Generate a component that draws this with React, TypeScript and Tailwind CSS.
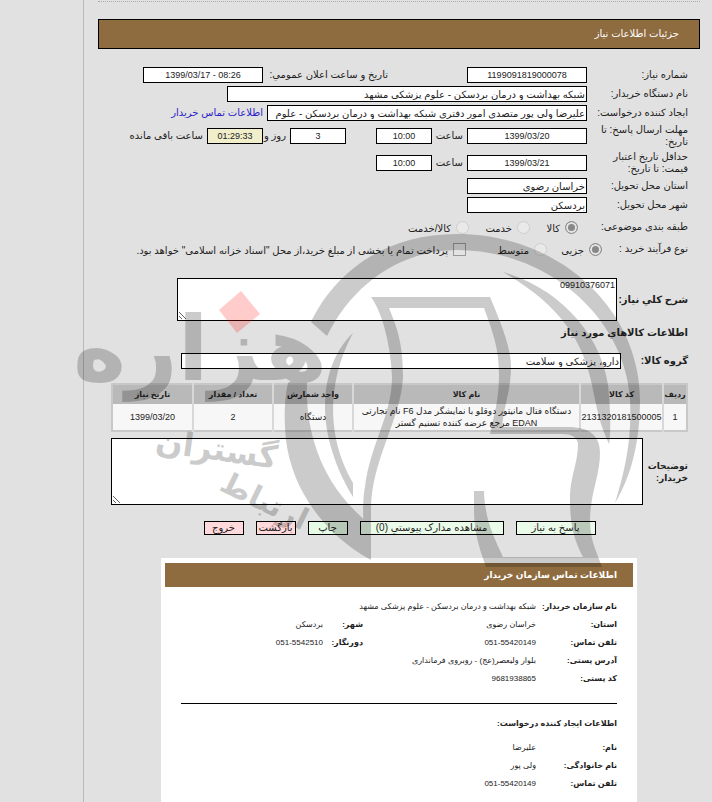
import type { ReactNode } from 'react';

const ITEM_HEADERS = [
  { label: 'ردیف', width: 'w-[24px]' },
  { label: 'کد کالا', width: 'w-[83px]' },
  { label: 'نام کالا', width: '' },
  { label: 'واحد شمارش', width: 'w-[80px]' },
  { label: 'تعداد / مقدار', width: 'w-[80px]' },
  { label: 'تاریخ نیاز', width: 'w-[81px]' },
];

const ITEMS = [
  [
    '1',
    '2131320181500005',
    'دستگاه فتال مانیتور دوقلو با نمایشگر مدل F6 نام تجارتی EDAN مرجع عرضه کننده تسنیم گستر',
    'دستگاه',
    '2',
    '1399/03/20',
  ],
];

const ACTIONS = [
  { label: 'پاسخ به نیاز', className: 'w-20 bg-[#eafbe9]' },
  { label: 'مشاهده مدارک پیوستي (0)', className: 'w-36 bg-[#eafbe9]' },
  { label: 'چاپ', className: 'w-10 bg-[#e6fbe6]' },
  { label: 'بازگشت', className: 'w-10 bg-[#ffd9dc]' },
  { label: 'خروج', className: 'w-10 bg-[#ffd9dc]' },
];

interface FieldProps {
  id: string;
  value: string;
  className: string;
  numeric?: boolean;
  label?: string;
}

function Field({ id, value, className, numeric, label }: FieldProps) {
  return (
    <input
      id={id}
      readOnly
      aria-label={label}
      defaultValue={value}
      className={`h-4 shrink-0 border border-black px-px ${numeric ? 'text-center text-[9px]' : ''} ${className}`}
    />
  );
}

function Row({ id, label, children }: { id: string; label: string; children: ReactNode }) {
  return (
    <div className="flex items-center">
      <label htmlFor={id} className="w-[101px] shrink-0 pl-1">
        {label}
      </label>
      <div className="flex items-center gap-1 whitespace-nowrap">{children}</div>
    </div>
  );
}

interface RadioProps {
  name: string;
  label: string;
  className?: string;
  checked?: boolean;
}

function Radio({ name, label, className = '', checked }: RadioProps) {
  return (
    <label className={`flex shrink-0 items-center gap-[5px] whitespace-nowrap ${className}`}>
      <input
        type="radio"
        name={name}
        defaultChecked={checked}
        className="size-[13px] shrink-0 appearance-none rounded-full border border-[#cfcfcf] bg-[#e9e9e9] checked:border-[#8f8f8f] checked:bg-[#888] checked:shadow-[inset_0_0_0_2px_#e4e4e4]"
      />
      <span className="pt-1">{label}</span>
    </label>
  );
}

function ContactRow({ label, value }: { label: string; value: string }) {
  return (
    <div className="flex">
      <dt className="w-[81px] shrink-0 font-bold">{label}</dt>
      <dd>{value}</dd>
    </div>
  );
}

function Watermark() {
  return (
    <svg
      aria-hidden="true"
      width="600"
      height="360"
      viewBox="60 220 600 360"
      className="pointer-events-none absolute top-[220px] left-[60px] opacity-20"
    >
      {/* Ring */}
      <path d="M311 322C335 272 385 234 457 234C560 234 640 310 640 400C640 440 632 475 615 503C625 470 632 440 630 400C626 320 550 250 457 250C400 250 352 285 327 336Z" />
      <path d="M288 383Q297 376 307 382C305 430 320 485 371 525V560C325 535 292 490 286 440C284 420 284 400 288 383Z" />
      <path d="M353 333C322 362 310 425 353 497V483C328 440 325 385 353 333Z" />
      <path d="M503 272C565 290 602 340 608 385Q612 425 609 444C600 425 597 410 592 385C583 340 560 305 503 272Z" />
      {/* Figure */}
      <path d="M371 297H490C504 330 511 350 511 367C511 390 504 405 502 427H568C590 427 600 436 600 453C600 475 590 495 590 520C590 540 596 550 602 567H486C478 545 474 530 474 510V491H484C485 520 493 535 503 557H583C574 540 570 525 570 500C570 475 578 465 578 443Q576 434 563 434H490C494 415 499 400 499 375C499 350 494 335 484 308H389C398 330 403 345 403 377C401 420 371 460 371 510V560L365 533C362 520 363 495 365 487C370 445 392 415 392 377C391 350 384 315 371 297Z" />
      <g fontFamily="DejaVu Sans, sans-serif" fontWeight="700" textAnchor="middle" direction="rtl">
        <text x="200" y="380" fontSize="90">هزاره</text>
        <text x="215" y="460" fontSize="32" transform="rotate(8 215 460)">گستران</text>
        <text x="260" y="510" fontSize="30" transform="rotate(26 260 510)">ارتباط</text>
      </g>
      <path fill="#f00" d="M241 291L260 314L237 333L219 310Z" />
    </svg>
  );
}

export default function App() {
  return (
    <div
      dir="rtl"
      className="relative flex min-h-screen flex-row-reverse overflow-hidden bg-[#e1e1e1] font-['Liberation_Sans','DejaVu_Sans',sans-serif] text-[10px] leading-3 text-[#222]"
    >
      <div className="w-[84px] shrink-0 border-r border-[#b8b8b8]" />
      <main className="flex min-w-0 flex-1 flex-col pr-3 pl-[14px]">
        <div className="h-[19px] shrink-0">
          <div className="h-[2px] border-b border-dotted border-[#aaa]" />
        </div>
        <h1 className="flex h-[30px] shrink-0 items-center border border-black bg-[#8f6c40] px-5 text-white">
          جزئیات اطلاعات نیاز
        </h1>

        <form className="flex flex-col pt-[18px] pr-3 pl-[13px]">
          <div className="flex flex-col gap-[3px]">
            <Row id="need-no" label="شماره نیاز:">
              <Field id="need-no" value="1199091819000078" numeric className="w-[120px] bg-white" />
              <label htmlFor="announced" className="mr-[75px] w-[121px]">
                تاریخ و ساعت اعلان عمومي:
              </label>
              <Field id="announced" value="1399/03/17 - 08:26" numeric className="w-[120px] bg-white [direction:ltr]" />
            </Row>
            <Row id="buyer" label="نام دستگاه خریدار:">
              <Field id="buyer" value="شبکه بهداشت و درمان بردسکن - علوم پزشکی مشهد" className="w-[360px] bg-white" />
            </Row>
            <Row id="creator" label="ایجاد کننده درخواست:">
              <Field
                id="creator"
                value="علیرضا ولی پور متصدی امور دفتری شبکه بهداشت و درمان بردسکن - علوم"
                className="w-[320px] bg-white"
              />
              <a href="#contact" className="text-[#2a22c8]">
                اطلاعات تماس خریدار
              </a>
            </Row>
            <Row id="reply-date" label="مهلت ارسال پاسخ: تا تاریخ:">
              <Field id="reply-date" value="1399/03/20" numeric className="w-[120px] bg-white" />
              <label htmlFor="reply-time" className="w-[27px]">ساعت</label>
              <Field id="reply-time" value="10:00" numeric className="w-14 bg-white" />
              <Field id="days" label="روز" value="3" numeric className="mr-[26px] w-14 bg-white" />
              <label htmlFor="remaining" className="w-[19px]">روز و</label>
              <Field id="remaining" value="01:29:33" numeric className="w-14 bg-[#f0eecb]" />
              <span>ساعت باقی مانده</span>
            </Row>
            <Row id="price-date" label="حداقل تاریخ اعتبار قیمت: تا تاریخ:">
              <Field id="price-date" value="1399/03/21" numeric className="w-[120px] bg-white" />
              <label htmlFor="price-time" className="w-[27px]">ساعت</label>
              <Field id="price-time" value="10:00" numeric className="w-14 bg-white" />
            </Row>
            <Row id="province" label="استان محل تحویل:">
              <Field id="province" value="خراسان رضوی" className="w-[120px] bg-white" />
            </Row>
            <Row id="city" label="شهر محل تحویل:">
              <Field id="city" value="بردسکن" className="w-[120px] bg-white" />
            </Row>
          </div>

          <div role="radiogroup" aria-label="طبقه بندی موضوعی" className="mt-[6px] flex h-4 items-center">
            <span className="w-[110px] shrink-0">طبقه بندی موضوعی:</span>
            <Radio name="subject" label="کالا" checked className="w-12" />
            <Radio name="subject" label="خدمت" className="w-[61px]" />
            <Radio name="subject" label="کالا/خدمت" />
          </div>
          <div role="radiogroup" aria-label="نوع فرآیند خرید" className="mt-[6px] flex h-4 items-center">
            <span className="w-[86px] shrink-0">نوع فرآیند خرید :</span>
            <Radio name="process" label="جزیی" checked className="w-[55px]" />
            <Radio name="process" label="متوسط" className="w-[81px]" />
            <label className="flex items-center gap-[5px] whitespace-nowrap">
              <input
                type="checkbox"
                className="size-[13px] shrink-0 appearance-none border border-[#999] bg-[#e4e4e4]"
              />
              <span className="pt-1">پرداخت تمام یا بخشی از مبلغ خرید،از محل "اسناد خزانه اسلامی" خواهد بود.</span>
            </label>
          </div>

          <div className="mt-[21px] flex items-center">
            <label htmlFor="summary" className="w-[71px] shrink-0 font-bold">
              شرح کلي نیاز:
            </label>
            <textarea
              id="summary"
              readOnly
              defaultValue="09910376071"
              className="h-[43px] w-[440px] border border-black bg-white px-px text-[9px]"
            />
          </div>
          <h2 className="mt-[6px] font-bold">اطلاعات کالاهاي مورد نیاز</h2>
          <div className="mt-[14px] flex items-center">
            <label htmlFor="group" className="w-[67px] shrink-0 font-bold">
              گروه کالا:
            </label>
            <Field id="group" value="دارو، پزشکی و سلامت" className="w-[440px] bg-white" />
          </div>

          <table className="mt-[14px] w-full table-fixed border-2 border-[#c8c8c8] text-center text-[9px]">
            <thead>
              <tr className="h-5 bg-[#b9b9b9] text-[8px]">
                {ITEM_HEADERS.map((h) => (
                  <th key={h.label} className={`border-l-2 border-[#d8d8d8] p-0 last:border-l-0 ${h.width}`}>
                    {h.label}
                  </th>
                ))}
              </tr>
            </thead>
            <tbody>
              {ITEMS.map((item) => (
                <tr key={item[1]} className="h-[27px] bg-[#f7f7f7]">
                  {item.map((cell) => (
                    <td key={cell} className="border-l-2 border-[#d8d8d8] p-0 last:border-l-0">
                      {cell}
                    </td>
                  ))}
                </tr>
              ))}
            </tbody>
          </table>

          <div className="mt-[6px] flex items-center">
            <label htmlFor="notes" className="w-[45px] shrink-0 text-[9px] font-bold">
              توضیحات خریدار:
            </label>
            <textarea id="notes" readOnly className="h-[67px] min-w-0 flex-1 border border-black bg-white" />
          </div>

          <div className="mt-4 flex justify-center gap-3">
            {ACTIONS.map((action) => (
              <button
                key={action.label}
                type="button"
                className={`h-[14px] border border-black whitespace-nowrap ${action.className}`}
              >
                {action.label}
              </button>
            ))}
          </div>
        </form>

        <section
          id="contact"
          className="mx-[63px] mt-[23px] flex-1 bg-white px-1 pt-[5px] pb-[14px] text-[8px] leading-3"
        >
          <h2 className="flex h-6 items-center bg-[#8f6c40] px-4 text-[9px] font-bold text-white">
            اطلاعات تماس سازمان خریدار
          </h2>
          <div className="px-4 pt-[14px]">
            <dl className="flex flex-col gap-[6px]">
              <ContactRow label="نام سازمان خریدار:" value="شبکه بهداشت و درمان بردسکن - علوم پزشکی مشهد" />
              <div className="grid grid-cols-[254px_1fr] gap-y-[6px]">
                <ContactRow label="استان:" value="خراسان رضوی" />
                <div className="flex">
                  <dt className="w-10 font-bold">شهر:</dt>
                  <dd>بردسکن</dd>
                </div>
                <ContactRow label="تلفن تماس:" value="051-55420149" />
                <div className="flex">
                  <dt className="w-10 font-bold">دورنگار:</dt>
                  <dd>051-5542510</dd>
                </div>
              </div>
              <ContactRow label="آدرس پستی:" value="بلوار ولیعصر(عج) - روبروی فرمانداری" />
              <ContactRow label="کد پستی:" value="9681938865" />
            </dl>
            <hr className="mt-[18px] border-black" />
            <h3 className="mt-[14px] font-bold">اطلاعات ایجاد کننده درخواست:</h3>
            <dl className="mt-3 flex flex-col gap-[6px]">
              <ContactRow label="نام:" value="علیرضا" />
              <ContactRow label="نام خانوادگی:" value="ولی پور" />
              <ContactRow label="تلفن تماس:" value="051-55420149" />
            </dl>
          </div>
        </section>
      </main>
      <Watermark />
    </div>
  );
}
